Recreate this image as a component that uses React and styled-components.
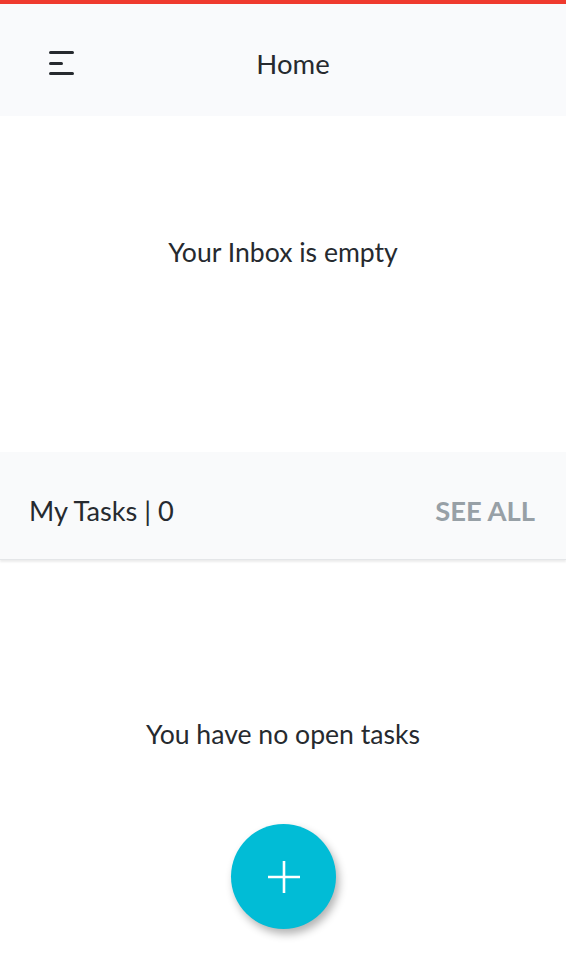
import React from "react";
import styled, { createGlobalStyle } from "styled-components";

const GlobalStyle = createGlobalStyle`
  html, body {
    margin: 0;
    padding: 0;
    background: #ffffff;
  }
  body {
    font-family: "Lato", "Noto Sans", sans-serif;
    color: #262a2f;
  }
`;

const Screen = styled.div`
  width: 566px;
  height: 966px;
  display: flex;
  flex-direction: column;
  overflow: hidden;
  position: relative;
`;

const StatusStrip = styled.div`
  height: 4px;
  background: #ef3a2e;
`;

const Header = styled.header`
  height: 112px;
  box-sizing: border-box;
  padding-top: 6px;
  background: #f9fafc;
  display: grid;
  grid-template-columns: 110px 1fr 90px;
  align-items: center;
`;

const MenuButton = styled.button`
  border: none;
  background: transparent;
  padding: 0;
  margin-left: 49px;
  width: 26px;
  height: 24px;
  display: flex;
  flex-direction: column;
  justify-content: space-between;
  align-items: flex-start;
  cursor: pointer;
`;

const MenuLine = styled.span`
  display: block;
  height: 3px;
  border-radius: 2px;
  width: ${(p) => (p.$short ? "14px" : "25px")};
  background: #262a2f;
`;

const Title = styled.h1`
  margin: 0;
  font-size: 27.5px;
  font-weight: 400;
  text-align: center;
`;

const EmptyPanel = styled.section`
  height: ${(p) => p.$height}px;
  display: flex;
  align-items: center;
  justify-content: center;
  padding-bottom: ${(p) => p.$offset || 0}px;
  box-sizing: border-box;
`;

const EmptyText = styled.p`
  margin: 0;
  font-size: 26.6px;
`;

const SectionBar = styled.div`
  height: 108px;
  box-sizing: border-box;
  background: #f9fafb;
  display: flex;
  align-items: center;
  justify-content: space-between;
  padding: 9px 31px 0 29px;
  box-shadow: 0 2px 2px rgba(0, 0, 0, 0.08);
  border-bottom: 1px solid #e4e6e8;
  position: relative;
  z-index: 1;
`;

const SectionTitle = styled.span`
  font-size: 27.2px;
`;

const SeeAll = styled.span`
  font-size: 27.4px;
  font-weight: 700;
  color: #97a0a6;
`;

const Fab = styled.button`
  position: absolute;
  left: 231px;
  top: 824px;
  width: 105px;
  height: 105px;
  border-radius: 50%;
  border: none;
  background: #01bcd6;
  box-shadow: 3px 5px 8px rgba(0, 0, 0, 0.3);
  display: flex;
  align-items: center;
  justify-content: center;
  cursor: pointer;
`;

function App() {
  return (
    <>
      <GlobalStyle />
      <Screen>
        <StatusStrip />
        <Header>
          <MenuButton aria-label="Menu">
            <MenuLine />
            <MenuLine $short />
            <MenuLine />
          </MenuButton>
          <Title>Home</Title>
          <div />
        </Header>
        <EmptyPanel $height={336} $offset={64}>
          <EmptyText>Your Inbox is empty</EmptyText>
        </EmptyPanel>
        <SectionBar>
          <SectionTitle>My Tasks | 0</SectionTitle>
          <SeeAll>SEE ALL</SeeAll>
        </SectionBar>
        <EmptyPanel $height={350} $offset={2}>
          <EmptyText>You have no open tasks</EmptyText>
        </EmptyPanel>
        <Fab aria-label="Add task">
          <svg width="34" height="34" viewBox="0 0 34 34">
            <path d="M17 1v32M1 17h32" stroke="#fff" strokeWidth="2.6" />
          </svg>
        </Fab>
      </Screen>
    </>
  );
}

export default App;
